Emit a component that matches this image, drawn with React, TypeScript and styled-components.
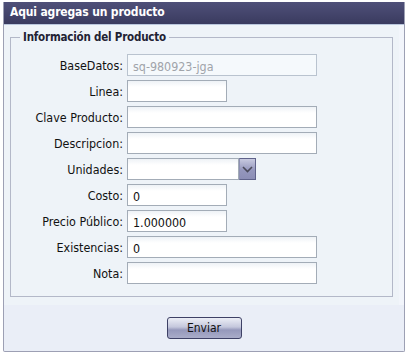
import { createGlobalStyle, styled } from "styled-components";

const GlobalStyle = createGlobalStyle`
  body {
    margin: 0;
    background: #ffffff;
    font-family: "DejaVu Sans Condensed", "DejaVu Sans", Tahoma, sans-serif;
    font-size: 12px;
  }
`;

type Field = {
  label: string;
  value?: string;
  width: number;
  disabled?: boolean;
  combo?: boolean;
};

const fields: Field[] = [
  { label: "BaseDatos:", value: "sq-980923-jga", width: 190, disabled: true },
  { label: "Linea:", width: 100 },
  { label: "Clave Producto:", width: 190 },
  { label: "Descripcion:", width: 190 },
  { label: "Unidades:", width: 112, combo: true },
  { label: "Costo:", value: "0", width: 100 },
  { label: "Precio Público:", value: "1.000000", width: 100 },
  { label: "Existencias:", value: "0", width: 190 },
  { label: "Nota:", width: 190 },
];

function App() {
  return (
    <>
      <GlobalStyle />
      <Panel>
        <Header>Aqui agregas un producto</Header>
        <Body>
          <FieldSet>
            <Legend>Información del Producto</Legend>
            {fields.map((f) => (
              <Row key={f.label}>
                <Label>{f.label}</Label>
                <Input
                  $width={f.width}
                  $disabled={f.disabled}
                  readOnly
                  value={f.value ?? ""}
                />
                {f.combo && (
                  <Trigger>
                    <svg width="11" height="7" viewBox="0 0 11 7">
                      <path
                        d="M1 1 L5.5 5.5 L10 1"
                        fill="none"
                        stroke="#4a4a5a"
                        strokeWidth="1.6"
                      />
                    </svg>
                  </Trigger>
                )}
              </Row>
            ))}
          </FieldSet>
        </Body>
        <Footer>
          <Button>Enviar</Button>
        </Footer>
      </Panel>
    </>
  );
}

const Panel = styled.div`
  margin: 2px 0 0 3px;
  width: 400px;
  border: 1px solid #9da0b4;
  border-top: none;
  border-radius: 0 0 2px 2px;
  background: #eaeef7;
`;

const Header = styled.div`
  height: 22px;
  line-height: 21px;
  padding-left: 6px;
  background: linear-gradient(#4f5079, #3a3b5f);
  border-bottom: 1px solid #b9c6dc;
  color: #ffffff;
  font-weight: bold;
  font-size: 12px;
  letter-spacing: -0.15px;
`;

const Body = styled.div`
  background: #eef3f8;
  padding: 5px 6px 8px 6px;
  border-right: 5px solid #f2f5fb;
`;

const FieldSet = styled.fieldset`
  margin: 0;
  border: 1px solid #b3b8c8;
  padding: 10px 8px 12px 8px;
  display: flex;
  flex-direction: column;
  gap: 4px;
`;

const Legend = styled.legend`
  font-weight: bold;
  font-size: 11.5px;
  letter-spacing: -0.2px;
  color: #222233;
  padding: 0 3px;
  margin-left: 1px;
`;

const Row = styled.div`
  display: flex;
  align-items: center;
  height: 22px;
`;

const Label = styled.label`
  width: 104px;
  text-align: right;
  padding-right: 4px;
  color: #111111;
  font-size: 12.4px;
`;

const Input = styled.input<{ $width: number; $disabled?: boolean }>`
  box-sizing: border-box;
  width: ${(p) => p.$width}px;
  height: 22px;
  margin: 0;
  padding: 2px 5px 0 5px;
  border: 1px solid ${(p) => (p.$disabled ? "#b9c3cf" : "#a3acb7")};
  background: ${(p) =>
    p.$disabled ? "#f5f9fc" : "linear-gradient(#eef2f6, #ffffff 6px)"};
  color: ${(p) => (p.$disabled ? "#a0a4aa" : "#111111")};
  font-family: inherit;
  font-size: 12.4px;
  outline: none;
`;

const Trigger = styled.div`
  box-sizing: border-box;
  width: 17px;
  height: 22px;
  border: 1px solid #5f628a;
  border-left-color: #8c8fb2;
  background: linear-gradient(#c8cae0, #9597bd 55%, #8c8eb6);
  display: flex;
  align-items: center;
  justify-content: center;
`;

const Footer = styled.div`
  height: 46px;
  display: flex;
  justify-content: center;
  align-items: center;
`;

const Button = styled.button`
  width: 75px;
  height: 22px;
  border: 1px solid #3e4166;
  border-radius: 3px;
  background: linear-gradient(#eceef6, #c4c7dc 45%, #9598bb 60%, #a9acc9);
  color: #111111;
  font-family: inherit;
  font-size: 12px;
  padding: 0;
`;

export default App;
